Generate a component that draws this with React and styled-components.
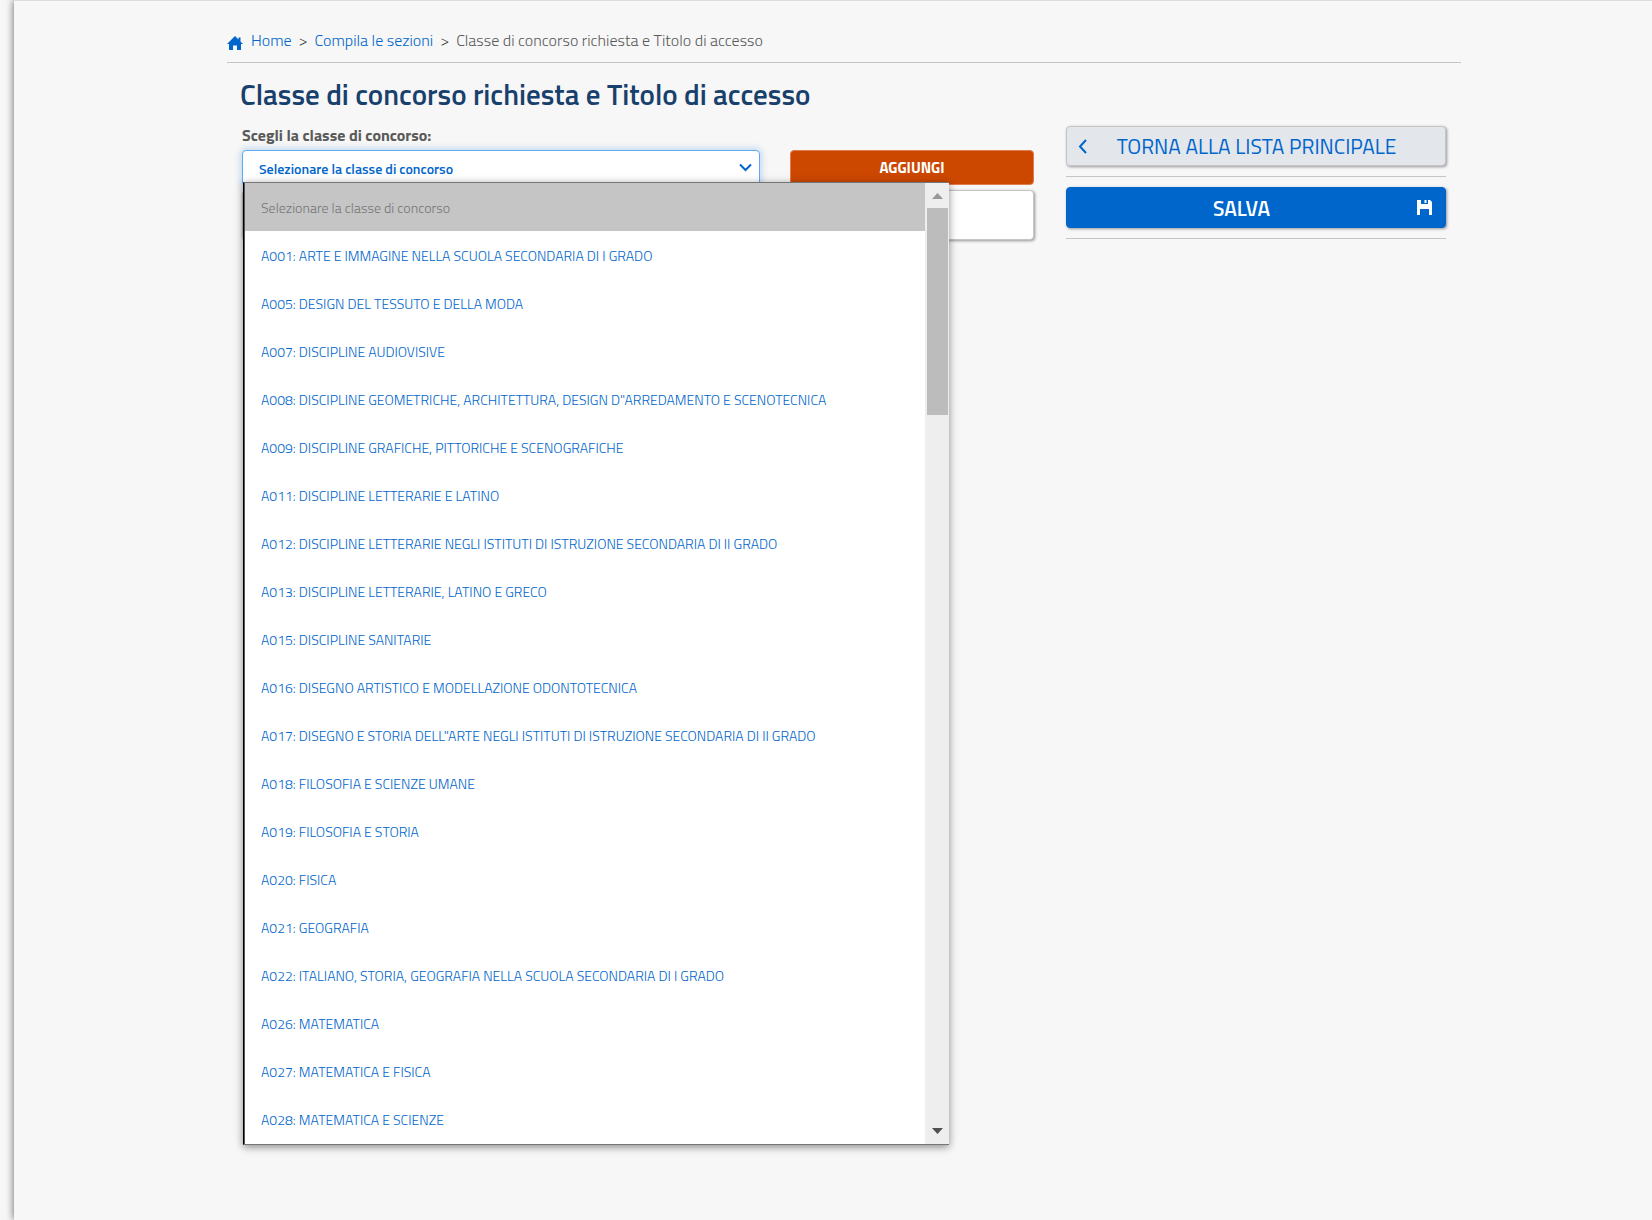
import React, { useState } from "react";

import styled, { createGlobalStyle, css } from "styled-components";

const GlobalStyle = createGlobalStyle`
  * {
    box-sizing: border-box;
  }
  body {
    margin: 0;
    background-color: #f7f7f7;
    font-family: "Titillium Web", Roboto, "Liberation Sans", sans-serif;
    color: #5c6f82;
  }
`;
const Page = styled.div`
  min-height: 100vh;
  margin-left: 14px;
  padding: 0 191px 75px 213px;
  border-top: 1px solid #dcdcdc;
  background-color: #f7f7f7;
  box-shadow: 0 0 8px rgba(0, 0, 0, 0.6);
`;
const Breadcrumb = styled.nav`
  display: flex;
  align-items: center;
  gap: 7px;
  height: 62px;
  padding-top: 16px;
  border-bottom: 1px solid #c5c5c5;
  font-size: 16px;
  font-weight: 300;
  line-height: 24px;
  white-space: nowrap;
`;
const HomeIcon = styled.svg`
  width: 16px;
  height: 16px;
  margin: 6px 1px 0 0;
  fill: #06c;
`;
const Crumb = styled.a`
  color: #06c;
  text-decoration: none;
  :hover {
    text-decoration: underline;
  }
`;
const Separator = styled.span`
  color: #333;
`;
const Current = styled.span`
  color: #5a5a5a;
`;
const Title = styled.h1`
  margin: 11px 13px 12px;
  color: #17406d;
  font-size: 29px;
  font-weight: 600;
  line-height: 40px;
`;
const Columns = styled.div`
  display: grid;
  grid-template-columns: minmax(0, 1fr) 380px;
  gap: 32px;
  align-items: start;
  padding: 0 15px;
`;
const Label = styled.label`
  display: block;
  margin-bottom: 6px;
  color: #5a5a5a;
  font-size: 16px;
  font-weight: 700;
  line-height: 18px;
`;
const FormRow = styled.div`
  display: grid;
  grid-template-columns: minmax(0, 1fr) 244px;
  gap: 30px;
`;
const SelectBox = styled.div`
  position: relative;
`;
const Select = styled.select`
  appearance: none;
  width: 100%;
  height: 36px;
  padding: 0 16px;
  border: 1px solid #5cabf0;
  border-radius: 4px;
  outline: none;
  background-color: white;
  box-shadow: 0 0 6px 2px rgba(0, 102, 204, 0.2);
  color: #06c;
  font-family: inherit;
  font-size: 14px;
  font-weight: 600;
`;
const SelectArrow = styled.svg`
  position: absolute;
  top: 12px;
  right: 8px;
  width: 13px;
  height: 11px;
  fill: none;
  stroke: #06c;
  stroke-width: 2;
  pointer-events: none;
`;
const Menu = styled.div`
  position: absolute;
  z-index: 2;
  top: 32px;
  left: 1px;
  display: flex;
  width: 706px;
  border: 1px solid #767676;
  border-left: 1px solid black;
  border-right: none;
  background-color: white;
  box-shadow: 0 2px 8px rgba(0, 0, 0, 0.45);
`;
const Options = styled.ul`
  flex: 1;
  margin: 0;
  padding: 0 0 1px;
  border-left: 1px solid #555;
  list-style: none;
`;
const Option = styled.li`
  height: 48px;
  padding: 1px 16px 0;
  color: #06c;
  cursor: pointer;
  font-size: 14px;
  font-weight: 300;
  line-height: 48px;
  white-space: nowrap;
  ${({ $disabled }) =>
    $disabled &&
    css`
      background-color: #c5c5c5;
      color: #757575;
      cursor: default;
    `}
`;
const ScrollBar = styled.div`
  display: flex;
  flex-direction: column;
  align-items: center;
  width: 24px;
  background-color: #eee;
`;
const ScrollArrow = styled.svg`
  width: 11px;
  height: 25px;
  fill: ${({ $active }) => ($active ? "#505050" : "#989898")};
`;
const Thumb = styled.div`
  width: 21px;
  height: 207px;
  margin-bottom: auto;
  background-color: #bcbcbc;
`;
const AddButton = styled.button`
  height: 35px;
  border: 1px solid #e07b4a;
  border-radius: 4px;
  background-color: #cc4700;
  color: white;
  cursor: pointer;
  font-family: inherit;
  font-size: 15px;
  font-weight: 700;
`;
const SelectedBox = styled.div`
  height: 50px;
  margin-top: 4px;
  border: 1px solid #c5c5c5;
  border-radius: 4px;
  background-color: white;
  box-shadow: 1px 1px 3px rgba(0, 0, 0, 0.4);
`;
const Actions = styled.aside`
  display: flex;
  flex-direction: column;
`;
const ActionButton = styled.button`
  display: flex;
  align-items: center;
  height: ${({ $primary }) => ($primary ? 41 : 40)}px;
  padding: 0 13px 0 9px;
  border: 1px solid ${({ $primary }) => ($primary ? "#06c" : "#c5c5c5")};
  border-radius: 4px;
  background-color: ${({ $primary }) => ($primary ? "#06c" : "#e3e7ec")};
  box-shadow: 1px 1px 3px rgba(0, 0, 0, 0.4);
  color: ${({ $primary }) => ($primary ? "white" : "#06c")};
  cursor: pointer;
  font-family: inherit;
  font-size: 21px;
  font-weight: ${({ $primary }) => ($primary ? 600 : 400)};
`;
const ActionText = styled.span`
  flex: 1;
  padding-right: 10px;
  text-align: center;
`;
const ActionIcon = styled.svg`
  width: 15px;
  height: 15px;
`;
const Divider = styled.hr`
  width: 100%;
  margin: 10px 0;
  border: none;
  border-top: 1px solid #c5c5c5;
`;

const placeholder = "Selezionare la classe di concorso";
const classi = [
  "A001: ARTE E IMMAGINE NELLA SCUOLA SECONDARIA DI I GRADO",
  "A005: DESIGN DEL TESSUTO E DELLA MODA",
  "A007: DISCIPLINE AUDIOVISIVE",
  "A008: DISCIPLINE GEOMETRICHE, ARCHITETTURA, DESIGN D\"ARREDAMENTO E SCENOTECNICA",
  "A009: DISCIPLINE GRAFICHE, PITTORICHE E SCENOGRAFICHE",
  "A011: DISCIPLINE LETTERARIE E LATINO",
  "A012: DISCIPLINE LETTERARIE NEGLI ISTITUTI DI ISTRUZIONE SECONDARIA DI II GRADO",
  "A013: DISCIPLINE LETTERARIE, LATINO E GRECO",
  "A015: DISCIPLINE SANITARIE",
  "A016: DISEGNO ARTISTICO E MODELLAZIONE ODONTOTECNICA",
  "A017: DISEGNO E STORIA DELL\"ARTE NEGLI ISTITUTI DI ISTRUZIONE SECONDARIA DI II GRADO",
  "A018: FILOSOFIA E SCIENZE UMANE",
  "A019: FILOSOFIA E STORIA",
  "A020: FISICA",
  "A021: GEOGRAFIA",
  "A022: ITALIANO, STORIA, GEOGRAFIA NELLA SCUOLA SECONDARIA DI I GRADO",
  "A026: MATEMATICA",
  "A027: MATEMATICA E FISICA",
  "A028: MATEMATICA E SCIENZE",
];

const App = () => {
  const [classe, setClasse] = useState("");
  return (
    <>
      <GlobalStyle />
      <Page>
        <Breadcrumb aria-label="breadcrumb">
          <HomeIcon viewBox="0 0 16 16" aria-hidden="true">
            <path d="M8 1 0 9h2v6h4v-4.500h4V15h4V9h2l-2.500-2.500V2.500h-2v2z" />
          </HomeIcon>
          <Crumb href="#home">Home</Crumb>
          <Separator>&gt;</Separator>
          <Crumb href="#sezioni">Compila le sezioni</Crumb>
          <Separator>&gt;</Separator>
          <Current>Classe di concorso richiesta e Titolo di accesso</Current>
        </Breadcrumb>
        <Title>Classe di concorso richiesta e Titolo di accesso</Title>
        <Columns>
          <main>
            <Label htmlFor="classe">Scegli la classe di concorso:</Label>
            <FormRow>
              <SelectBox>
                <Select
                  id="classe"
                  value={classe}
                  onChange={(e) => setClasse(e.target.value)}
                >
                  <option value="">{placeholder}</option>
                  {classi.map((c) => (
                    <option key={c} value={c}>
                      {c}
                    </option>
                  ))}
                </Select>
                <SelectArrow viewBox="0 0 13 11" aria-hidden="true">
                  <path d="M1 2.500l5.500 5.500L12 2.500" />
                </SelectArrow>
                <Menu>
                  <Options role="listbox" aria-label="Classe di concorso">
                    <Option role="option" aria-disabled="true" $disabled>
                      {placeholder}
                    </Option>
                    {classi.map((c) => (
                      <Option
                        key={c}
                        role="option"
                        aria-selected={c === classe}
                        onClick={() => setClasse(c)}
                      >
                        {c}
                      </Option>
                    ))}
                  </Options>
                  <ScrollBar aria-hidden="true">
                    <ScrollArrow viewBox="0 0 11 25">
                      <path d="M0 16h11L5.500 10z" />
                    </ScrollArrow>
                    <Thumb />
                    <ScrollArrow viewBox="0 0 11 25" $active>
                      <path d="M0 9h11L5.500 15z" />
                    </ScrollArrow>
                  </ScrollBar>
                </Menu>
              </SelectBox>
              <AddButton type="button">AGGIUNGI</AddButton>
            </FormRow>
            <SelectedBox />
          </main>
          <Actions>
            <ActionButton type="button">
              <ActionIcon viewBox="0 0 15 15" aria-hidden="true">
                <path
                  d="M10 1 4 7.500l6 6.500"
                  fill="none"
                  stroke="currentColor"
                  strokeWidth="2"
                />
              </ActionIcon>
              <ActionText>TORNA ALLA LISTA PRINCIPALE</ActionText>
            </ActionButton>
            <Divider />
            <ActionButton type="button" $primary>
              <ActionText>SALVA</ActionText>
              <ActionIcon viewBox="0 0 15 15" aria-hidden="true">
                <path
                  d="M0 0h4v4h7V0h2l2 2v13h-3V9H3v6H0zM7.500 0h2v3h-2z"
                  fill="currentColor"
                />
              </ActionIcon>
            </ActionButton>
            <Divider />
          </Actions>
        </Columns>
      </Page>
    </>
  );
};

export default App;
